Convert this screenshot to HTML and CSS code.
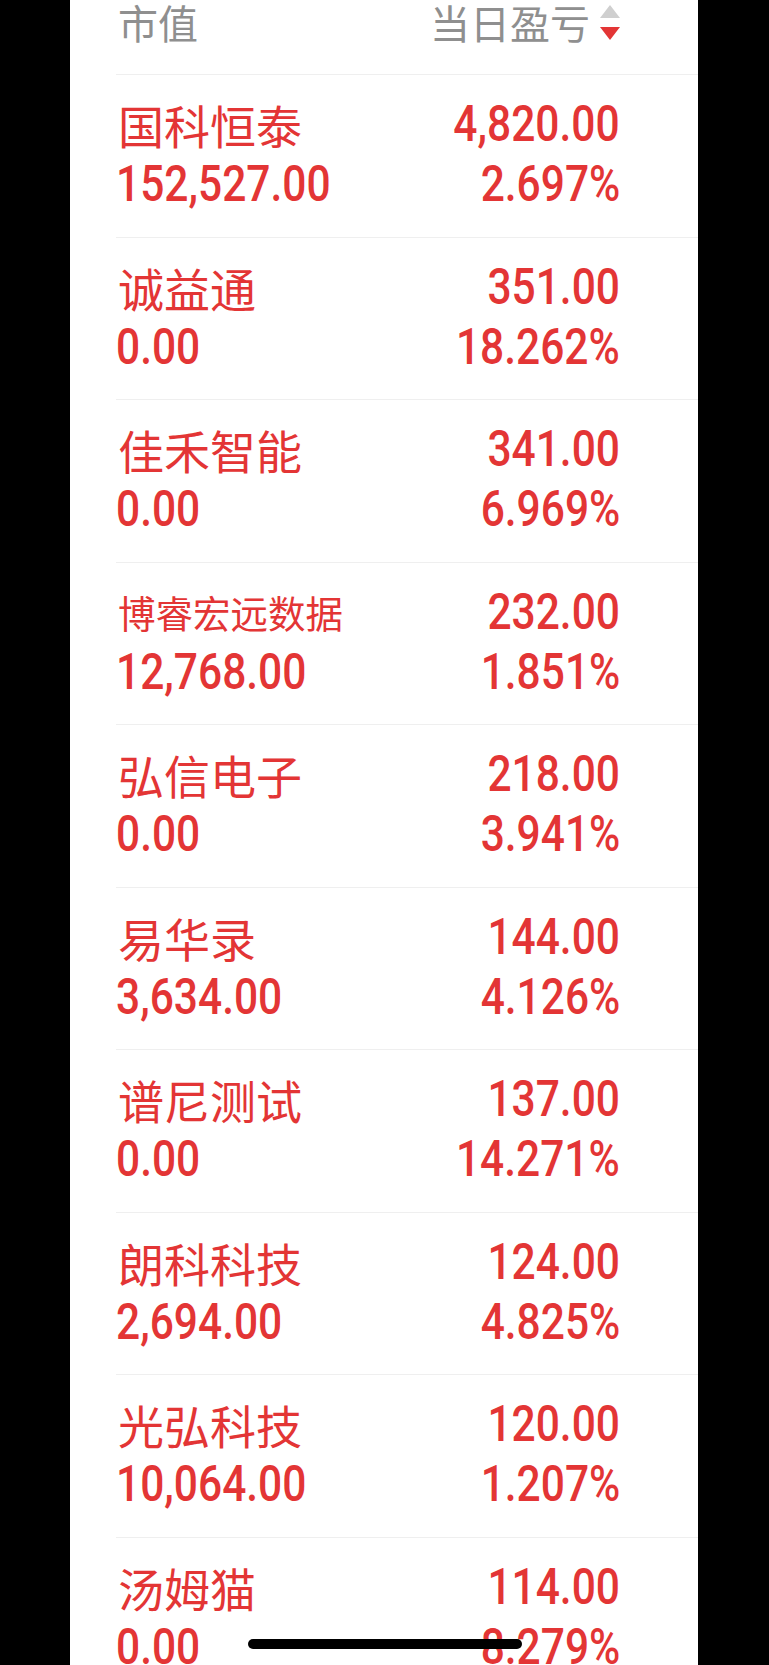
FILE: index.html
```html
<!DOCTYPE html>
<html lang="zh-CN">
<head>
    <meta charset="UTF-8">
    <meta name="viewport" content="width=device-width, initial-scale=1.0">
    <title>持仓</title>
    <link rel="stylesheet" href="styles.css">
</head>
<body>

<div class="screen">
    <div class="list-head">
        <span class="head-title">市值</span>
        <span class="head-sort">
            当日盈亏
            <span class="sort-icon">
                <i class="tri tri-up"></i>
                <i class="tri tri-down"></i>
            </span>
        </span>
    </div>

    <div class="stock">
        <div class="stock-line">
            <span class="stock-name">国科恒泰</span>
            <span class="num num-right">4,820.00</span>
        </div>
        <div class="stock-line">
            <span class="num">152,527.00</span>
            <span class="num num-right">2.697%</span>
        </div>
    </div>

    <div class="stock">
        <div class="stock-line">
            <span class="stock-name">诚益通</span>
            <span class="num num-right">351.00</span>
        </div>
        <div class="stock-line">
            <span class="num">0.00</span>
            <span class="num num-right">18.262%</span>
        </div>
    </div>

    <div class="stock">
        <div class="stock-line">
            <span class="stock-name">佳禾智能</span>
            <span class="num num-right">341.00</span>
        </div>
        <div class="stock-line">
            <span class="num">0.00</span>
            <span class="num num-right">6.969%</span>
        </div>
    </div>

    <div class="stock">
        <div class="stock-line">
            <span class="stock-name stock-name-long">博睿宏远数据</span>
            <span class="num num-right">232.00</span>
        </div>
        <div class="stock-line">
            <span class="num">12,768.00</span>
            <span class="num num-right">1.851%</span>
        </div>
    </div>

    <div class="stock">
        <div class="stock-line">
            <span class="stock-name">弘信电子</span>
            <span class="num num-right">218.00</span>
        </div>
        <div class="stock-line">
            <span class="num">0.00</span>
            <span class="num num-right">3.941%</span>
        </div>
    </div>

    <div class="stock">
        <div class="stock-line">
            <span class="stock-name">易华录</span>
            <span class="num num-right">144.00</span>
        </div>
        <div class="stock-line">
            <span class="num">3,634.00</span>
            <span class="num num-right">4.126%</span>
        </div>
    </div>

    <div class="stock">
        <div class="stock-line">
            <span class="stock-name">谱尼测试</span>
            <span class="num num-right">137.00</span>
        </div>
        <div class="stock-line">
            <span class="num">0.00</span>
            <span class="num num-right">14.271%</span>
        </div>
    </div>

    <div class="stock">
        <div class="stock-line">
            <span class="stock-name">朗科科技</span>
            <span class="num num-right">124.00</span>
        </div>
        <div class="stock-line">
            <span class="num">2,694.00</span>
            <span class="num num-right">4.825%</span>
        </div>
    </div>

    <div class="stock">
        <div class="stock-line">
            <span class="stock-name">光弘科技</span>
            <span class="num num-right">120.00</span>
        </div>
        <div class="stock-line">
            <span class="num">10,064.00</span>
            <span class="num num-right">1.207%</span>
        </div>
    </div>

    <div class="stock">
        <div class="stock-line">
            <span class="stock-name">汤姆猫</span>
            <span class="num num-right">114.00</span>
        </div>
        <div class="stock-line">
            <span class="num">0.00</span>
            <span class="num num-right">8.279%</span>
        </div>
    </div>
</div>

<!-- iOS home indicator -->
<div class="home-bar"></div>

</body>
</html>
```

FILE: styles.css
```css
html, body {
    margin: 0;
    padding: 0;
    background: #000;
}
body {
    height: 1665px;
    overflow: hidden;
}
.screen {
    width: 628px;
    height: 1665px;
    margin-left: 70px;
    background: #fff;
    overflow: hidden;
    font-family: "Noto Sans CJK SC", "Noto Sans", sans-serif;
    color: #e33535;
}
.list-head {
    display: flex;
    justify-content: space-between;
    align-items: center;
    height: 44px;
    margin: 0 78px 30px 46px;
    font-size: 40px;
    line-height: 44px;
    color: #8f8f8f;
}
.head-title {
    padding-left: 2px;
}
.head-sort {
    display: flex;
    align-items: center;
}
.sort-icon {
    display: flex;
    flex-direction: column;
    align-items: center;
    gap: 9px;
    margin-left: 9px;
    width: 21px;
}
.tri {
    display: block;
    width: 0;
    height: 0;
    border-left: 10px solid transparent;
    border-right: 10px solid transparent;
}
.tri-up {
    border-bottom: 13px solid #cfcfcf;
}
.tri-down {
    border-top: 13px solid #e33535;
}
.stock {
    height: 162.5px;
    box-sizing: border-box;
    margin-left: 46px;
    padding: 19px 78px 0 0;
    border-top: 1px solid #efefef;
}
.stock-line {
    display: flex;
    justify-content: space-between;
    align-items: center;
    height: 60px;
}
.stock-name {
    font-size: 46px;
    line-height: 60px;
    padding-left: 2px;
}
.stock-name-long {
    font-size: 37.5px;
}
.num {
    display: inline-block;
    font-family: Roboto, "Liberation Sans", sans-serif;
    font-weight: 500;
    font-size: 50px;
    line-height: 60px;
    transform: scaleX(0.85);
    transform-origin: left center;
}
.num-right {
    transform-origin: right center;
}
.home-bar {
    position: fixed;
    left: 50%;
    bottom: 16px;
    width: 274px;
    height: 10px;
    margin-left: -137px;
    border-radius: 5px;
    background: #000;
}
```
